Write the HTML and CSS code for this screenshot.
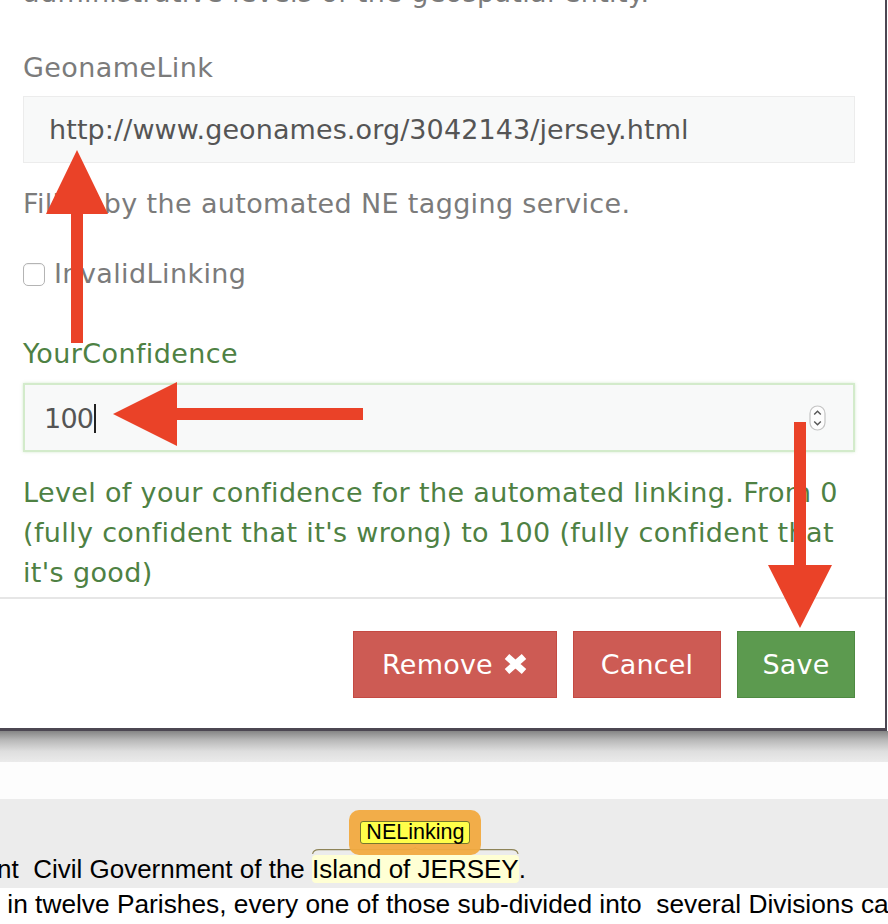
FILE: index.html
```html
<!DOCTYPE html>
<html lang="en">
<head>
<meta charset="utf-8">
<title>NE Linking</title>
<link rel="stylesheet" href="styles.css">
</head>
<body>
<div class="page">
  <div class="modal">
    <div class="modal-body">
      <p class="help help-prev">administrative levels of the geospatial entity.</p>

      <label class="label label-geo">GeonameLink</label>
      <div class="input input-url">http://www.geonames.org/3042143/jersey.html</div>
      <p class="help help-filled">Filled by the automated NE tagging service.</p>

      <div class="check-row">
        <span class="checkbox"></span>
        <span class="check-label">InvalidLinking</span>
      </div>

      <label class="label label-success">YourConfidence</label>
      <div class="input input-number">
        <span class="value">100<span class="caret"></span></span>
        <svg class="spinner" width="17" height="26" viewBox="0 0 17 26">
          <rect x="1" y="1" width="15" height="24" rx="7.5" fill="#fdfdfd" stroke="#c4c4c4" stroke-width="1.2"/>
          <path d="M5.2 9.6 L8.5 6.3 L11.8 9.6" fill="none" stroke="#555" stroke-width="1.4"/>
          <path d="M5.2 16.4 L8.5 19.7 L11.8 16.4" fill="none" stroke="#555" stroke-width="1.4"/>
        </svg>
      </div>
      <p class="help help-success">Level of your confidence for the automated linking. From 0<br>(fully confident that it's wrong) to 100 (fully confident that<br>it's good)</p>
    </div>
    <div class="modal-footer">
      <button class="btn btn-danger btn-remove">Remove
        <svg class="icon-x" width="25" height="22" viewBox="0 0 25 22">
          <path d="M4 3.5 L21 18.5 M21 3.5 L4 18.5" fill="none" stroke="#fff" stroke-width="6.8"/>
        </svg>
      </button>
      <button class="btn btn-danger btn-cancel">Cancel</button>
      <button class="btn btn-success btn-save">Save</button>
    </div>
  </div>

  <div class="shadow-band"></div>
  <div class="white-band"></div>

  <div class="text-row row-grey">
    <div class="text-line line-first">nt  Civil Government of the <span class="span-hl">Island of JERSEY<svg class="brace" viewBox="0 0 207 7" preserveAspectRatio="none"><path d="M0.6 7 Q1.2 2.6 7 2.6 L97 2.6 Q102.6 2.6 103.5 0.6 Q104.4 2.6 110 2.6 L200 2.6 Q205.8 2.6 206.4 7" fill="none" stroke="#8e8458" stroke-width="1.1"/></svg><span class="tag"><span class="tag-label">NELinking</span></span></span>.</div>
  </div>
  <div class="text-row row-white">
    <div class="text-line"> in twelve Parishes, every one of those sub-divided into  several Divisions called</div>
  </div>

  <svg class="arrows" width="888" height="924" viewBox="0 0 888 924">
    <polygon points="77,150 108,214 83,214 83,343 71,343 71,214 46,214" fill="#ea4228"/>
    <polygon points="113,414 177,382 177,408 363,408 363,420 177,420 177,446" fill="#ea4228"/>
    <polygon points="800,628 768,565 794,565 794,422 806,422 806,565 832,565" fill="#ea4228"/>
  </svg>
</div>
</body>
</html>
```

FILE: styles.css
```css
* {
  box-sizing: border-box;
}

html,
body {
  margin: 0;
  padding: 0;
}

body {
  background: #ffffff;
  font-family: "DejaVu Sans", "Noto Sans", sans-serif;
}

.page {
  position: relative;
  width: 888px;
  height: 924px;
  overflow: hidden;
}

/* ---------- modal ---------- */

.modal {
  width: 887px;
  background: #ffffff;
  border-right: 2px solid #4c4752;
  border-bottom: 3px solid #4c4752;
}

.modal-body {
  display: flex;
  flex-direction: column;
  align-items: stretch;
  padding: 0 30px 4px 23px;
  border-bottom: 2px solid #e6e6e6;
}

.help {
  margin: 0;
  font-size: 27px;
  line-height: 40px;
  letter-spacing: 0.35px;
  color: #7b7b7b;
  white-space: nowrap;
}

.help-prev {
  margin-top: -27px;
}

.label {
  display: block;
  font-size: 27px;
  line-height: 40px;
  letter-spacing: 0.4px;
  color: #7b7b7b;
}

.label-geo {
  margin-top: 35px;
}

.input {
  display: flex;
  align-items: center;
  background: #f8f9f9;
  font-size: 27px;
  color: #555555;
}

.input-url {
  margin-top: 8px;
  height: 67px;
  padding: 0 24px 0 25px;
  border: 1px solid #ececec;
  letter-spacing: 0.1px;
}

.help-filled {
  margin-top: 21px;
}

.check-row {
  display: flex;
  align-items: center;
  gap: 9px;
  margin-top: 30px;
  height: 40px;
}

.checkbox {
  width: 22px;
  height: 23px;
  border: 1.5px solid #b4b4b4;
  border-radius: 5px;
  background: #ffffff;
  box-shadow: inset 0 1px 1px rgba(0, 0, 0, 0.06);
}

.check-label {
  font-size: 27px;
  line-height: 40px;
  letter-spacing: 0.4px;
  color: #7b7b7b;
}

.label-success {
  margin-top: 40px;
  color: #4e8143;
}

.input-number {
  margin-top: 9px;
  height: 69px;
  padding: 0 27px 0 19px;
  justify-content: space-between;
  border: 2px solid #d3ebcb;
  box-shadow: 0 0 3px rgba(140, 200, 120, 0.35);
  color: #555555;
}

.value {
  display: flex;
  align-items: center;
  padding-top: 2px;
  letter-spacing: -0.8px;
}

.caret {
  display: inline-block;
  width: 1.5px;
  height: 29px;
  margin-left: 1px;
  background: #222222;
}

.spinner {
  display: block;
}

.help-success {
  margin-top: 21px;
  color: #4e8143;
}

/* ---------- footer ---------- */

.modal-footer {
  display: flex;
  justify-content: flex-end;
  gap: 16px;
  padding: 32px 30px 30px 0;
}

.btn {
  display: flex;
  align-items: center;
  justify-content: center;
  gap: 10px;
  height: 67px;
  padding: 0;
  font-family: "DejaVu Sans", "Noto Sans", sans-serif;
  font-size: 27px;
  letter-spacing: 0.2px;
  color: #ffffff;
  cursor: pointer;
}

.btn-danger {
  background: #cd5b54;
  border: 1px solid #c44a43;
}

.btn-success {
  background: #5c9a4f;
  border: 1px solid #4e8a42;
}

.btn-remove {
  width: 204px;
}

.btn-cancel {
  width: 148px;
}

.btn-save {
  width: 118px;
}

.icon-x {
  display: block;
  margin-top: -1px;
}

/* ---------- page below the modal ---------- */

.shadow-band {
  height: 31px;
  background: linear-gradient(#858585 0%, #b9b9b9 30%, #dedede 65%, #ebebeb 100%);
}

.white-band {
  height: 37px;
  background: #fdfdfd;
}

.text-row {
  font-family: "Liberation Sans", Arial, sans-serif;
  font-size: 26.3px;
  color: #000000;
}

.row-grey {
  height: 89px;
  padding-top: 56px;
  background: #ececec;
}

.row-white {
  padding-top: 2px;
  background: #ffffff;
}

.text-line {
  line-height: 28px;
  white-space: pre;
}

.line-first {
  margin-left: -3px;
  font-size: 26px;
}

.span-hl {
  position: relative;
  display: inline-block;
  background: #ffffd4;
  border-radius: 4px;
}

.tag {
  position: absolute;
  bottom: 100%;
  left: 50%;
  transform: translateX(-50%);
  display: flex;
  align-items: center;
  justify-content: center;
  width: 132px;
  height: 45px;
  padding-bottom: 1px;
  background: rgba(242, 170, 64, 0.95);
  border-radius: 10px;
}

.tag-label {
  display: block;
  height: 23px;
  padding: 0 5px;
  font-family: "Liberation Sans", Arial, sans-serif;
  font-size: 21.5px;
  line-height: 21px;
  color: #000000;
  background: #ffff4a;
  border: 1px solid #77772e;
  border-radius: 3px;
}

.brace {
  position: absolute;
  bottom: 100%;
  left: 0;
  width: 100%;
  height: 7px;
  margin-bottom: 1px;
}

/* ---------- annotation arrows ---------- */

.arrows {
  position: absolute;
  top: 0;
  left: 0;
  pointer-events: none;
}
```
